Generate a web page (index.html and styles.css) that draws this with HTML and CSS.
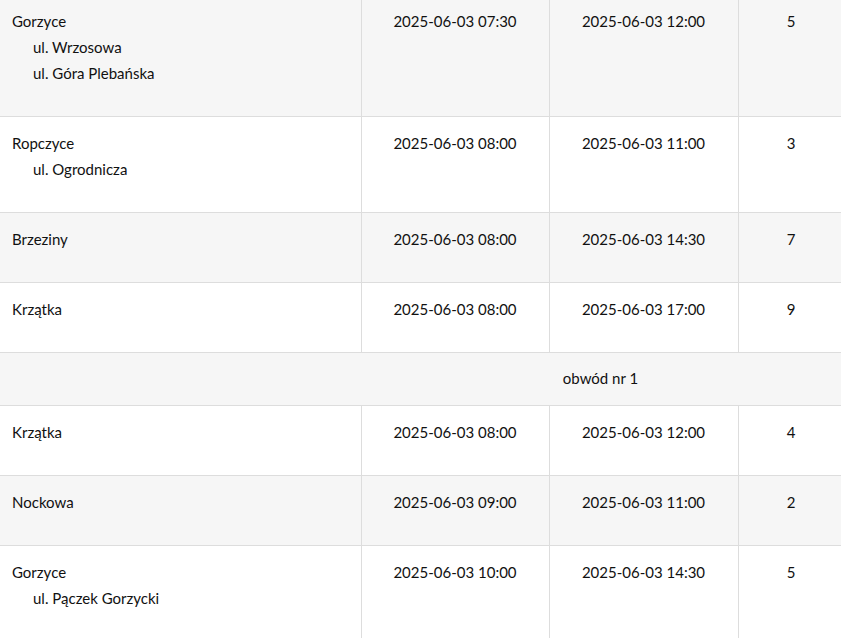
FILE: index.html
```html
<!DOCTYPE html>
<html lang="pl">
<head>
<meta charset="utf-8">
<link rel="stylesheet" href="styles.css">
</head>
<body>
<div class="wrap">
<table class="sched">
  <colgroup>
    <col class="c1"><col class="c2"><col class="c3"><col class="c4"><col class="c5">
  </colgroup>
  <tbody>
    <tr class="alt">
      <td class="place">Gorzyce<div class="street">ul. Wrzosowa</div><div class="street">ul. Góra Plebańska</div></td>
      <td>2025-06-03 07:30</td><td>2025-06-03 12:00</td><td>5</td><td></td>
    </tr>
    <tr>
      <td class="place">Ropczyce<div class="street">ul. Ogrodnicza</div></td>
      <td>2025-06-03 08:00</td><td>2025-06-03 11:00</td><td>3</td><td></td>
    </tr>
    <tr class="alt">
      <td class="place">Brzeziny</td>
      <td>2025-06-03 08:00</td><td>2025-06-03 14:30</td><td>7</td><td></td>
    </tr>
    <tr>
      <td class="place">Krzątka</td>
      <td>2025-06-03 08:00</td><td>2025-06-03 17:00</td><td>9</td><td></td>
    </tr>
    <tr class="group">
      <td colspan="5">obwód nr 1</td>
    </tr>
    <tr>
      <td class="place">Krzątka</td>
      <td>2025-06-03 08:00</td><td>2025-06-03 12:00</td><td>4</td><td></td>
    </tr>
    <tr class="alt">
      <td class="place">Nockowa</td>
      <td>2025-06-03 09:00</td><td>2025-06-03 11:00</td><td>2</td><td></td>
    </tr>
    <tr>
      <td class="place">Gorzyce<div class="street">ul. Pączek Gorzycki</div></td>
      <td>2025-06-03 10:00</td><td>2025-06-03 14:30</td><td>5</td><td></td>
    </tr>
  </tbody>
</table>
</div>
</body>
</html>
```
FILE: styles.css
```css
html, body {
  margin: 0;
  padding: 0;
  background: #ffffff;
  overflow: hidden;
}
.wrap {
  width: 841px;
  height: 638px;
  overflow: hidden;
}
.sched {
  margin-top: -6px;
  border-collapse: collapse;
  table-layout: fixed;
  width: 1202px;
  font-family: Lato, "Open Sans", sans-serif;
  font-size: 15px;
  line-height: 26px;
  color: #111111;
}
.c1 { width: 361px; }
.c2 { width: 188px; }
.c3 { width: 189px; }
.c4 { width: 106px; }
.sched td {
  border: 1px solid #dddddd;
  padding: 13px 12px 30px;
  text-align: center;
  vertical-align: top;
}
.sched td:first-child { border-left: none; }
.sched td.place { text-align: left; }
.street { padding-left: 21px; }
.sched tr.alt td,
.sched tr.group td { background: #f6f6f6; }
.sched tr.group td {
  padding: 12px 12px 14px;
}
```
